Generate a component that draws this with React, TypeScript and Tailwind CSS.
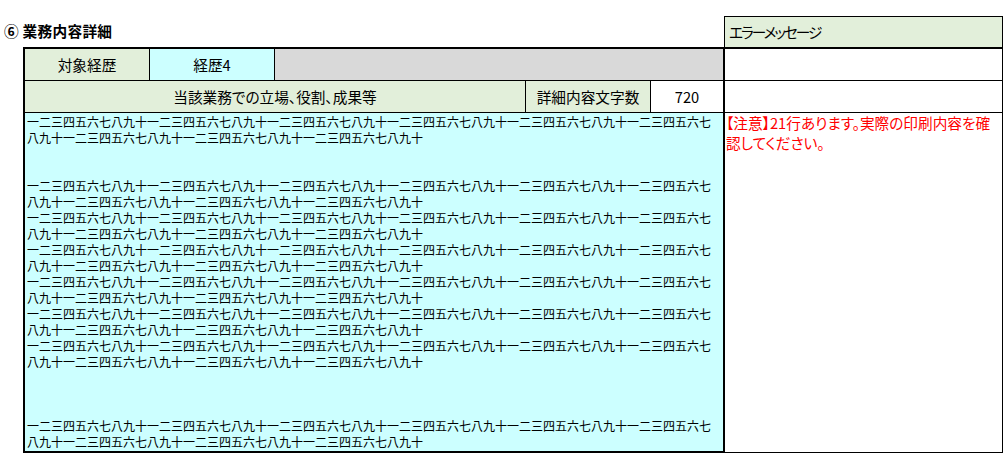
import React from 'react';

const LINE = '一二三四五六七八九十'.repeat(9);

// 21 lines of detail text (blank entries are empty lines in the cell)
const detailLines = [LINE, '', '', LINE, LINE, LINE, LINE, LINE, LINE, '', '', '', LINE];

export default function App() {
  return (
    <div className="w-[1004px] h-[459px] bg-white text-black font-['Noto_Sans_CJK_JP',sans-serif] overflow-hidden">
      <div className="flex pt-[16px]">
        {/* left side: title + main table */}
        <div className="w-[725px] shrink-0">
          <div className="h-[31px] flex items-center pl-[4px] text-[14.67px] font-bold leading-none tracking-[0.3px]">
            ⑥ 業務内容詳細
          </div>

          <div className="ml-[23px] w-[702px] border-2 border-black">
            {/* row 1 */}
            <div className="flex h-[32px] border-b border-black text-[14.67px]">
              <div className="w-[125px] shrink-0 border-r border-black bg-[#E2EFDA] flex items-center justify-center">
                対象経歴
              </div>
              <div className="w-[125px] shrink-0 border-r border-black bg-[#CCFFFF] flex items-center justify-center">
                経歴4
              </div>
              <div className="flex-1 bg-[#D9D9D9]" />
            </div>

            {/* row 2 */}
            <div className="flex h-[32px] border-b border-black text-[14.67px]">
              <div className="w-[501px] shrink-0 border-r border-black bg-[#E2EFDA] flex items-center justify-center [font-feature-settings:'palt']">
                当該業務での立場、役割、成果等
              </div>
              <div className="w-[125px] shrink-0 border-r border-black bg-[#E2EFDA] flex items-center justify-center">
                詳細内容文字数
              </div>
              <div className="flex-1 bg-white flex items-center justify-center">720</div>
            </div>

            {/* detail text */}
            <div className="h-[338px] bg-[#CCFFFF] pt-px pl-[2px]">
              <div className="w-[686px] text-[12px] leading-[16px] break-all">
                {detailLines.map((line, i) => (
                  <div key={i} className="min-h-[16px]">
                    {line}
                  </div>
                ))}
              </div>
            </div>
          </div>
        </div>

        {/* right side: error messages */}
        <div className="w-[279px] shrink-0 -ml-px">
          <div className="h-[31px] border-t border-l border-r border-black bg-[#E2EFDA] flex items-center pl-[4px] text-[14.67px] tracking-[-2px] [font-feature-settings:'palt']">
            エラーメッセージ
          </div>
          <div className="border-t-2 border-r border-b border-black">
            <div className="h-[32px] border-b border-black" />
            <div className="h-[32px] border-b border-black" />
            <div className="h-[339px] pl-[2px] text-[14.67px] leading-[20px] text-[#FF0000] whitespace-nowrap [font-feature-settings:'palt']">
              【注意】21行あります。実際の印刷内容を確
              <br />
              認してください。
            </div>
          </div>
        </div>
      </div>
    </div>
  );
}
